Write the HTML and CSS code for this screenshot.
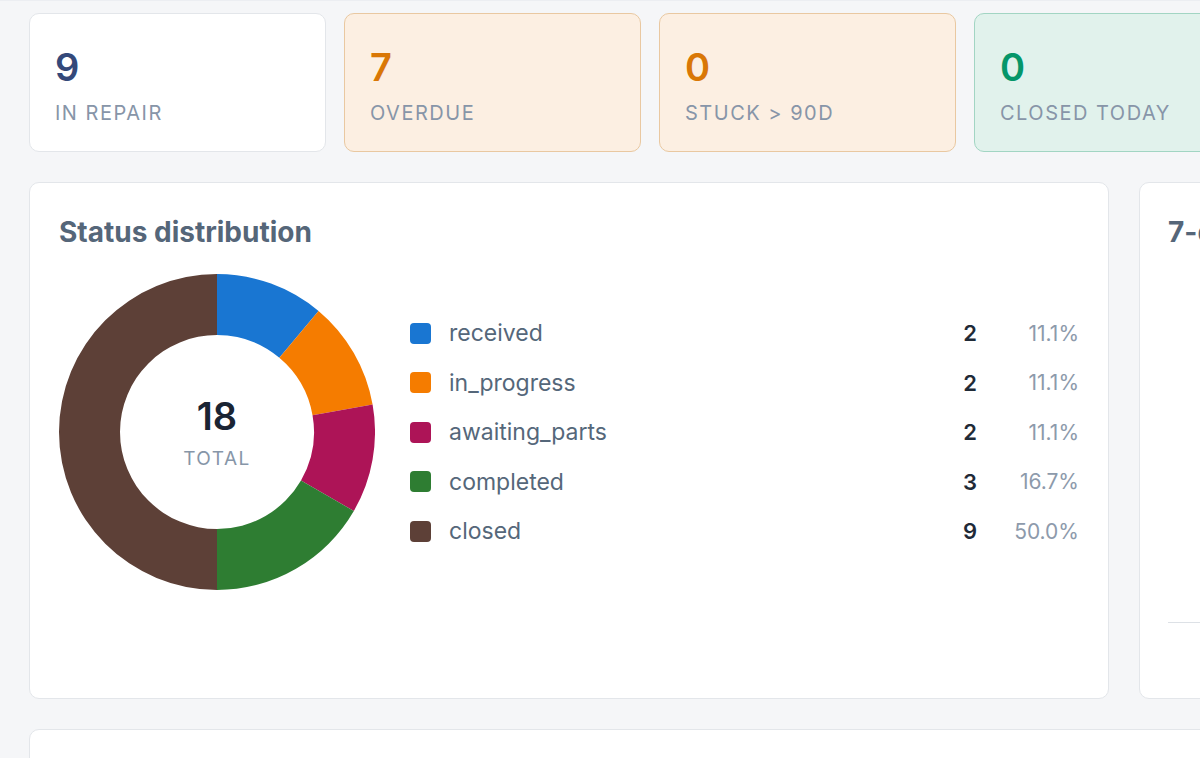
FILE: index.html
```html
<!DOCTYPE html>
<html lang="en">
<head>
<meta charset="utf-8">
<title>Repairs dashboard</title>
<link rel="stylesheet" href="styles.css">
</head>
<body>
<main class="page">
  <section class="stats">
    <div class="stat stat-neutral">
      <div class="stat-value">9</div>
      <div class="stat-label">IN REPAIR</div>
    </div>
    <div class="stat stat-warn">
      <div class="stat-value">7</div>
      <div class="stat-label">OVERDUE</div>
    </div>
    <div class="stat stat-warn">
      <div class="stat-value">0</div>
      <div class="stat-label">STUCK &gt; 90D</div>
    </div>
    <div class="stat stat-ok">
      <div class="stat-value">0</div>
      <div class="stat-label">CLOSED TODAY</div>
    </div>
  </section>

  <section class="row">
    <div class="panel panel-status">
      <h2 class="panel-title">Status distribution</h2>
      <div class="status-body">
        <div class="donut">
          <svg class="donut-svg" width="316" height="316" viewBox="0 0 316 316">
            <path fill="#1976d2" d="M158 0 A158 158 0 0 1 259.56 36.97 L220.35 83.70 A97 97 0 0 0 158 61 Z"/>
            <path fill="#f57c00" d="M259.56 36.97 A158 158 0 0 1 313.60 130.57 L253.53 141.16 A97 97 0 0 0 220.35 83.70 Z"/>
            <path fill="#ad1457" d="M313.60 130.57 A158 158 0 0 1 294.83 237 L242 206.5 A97 97 0 0 0 253.53 141.16 Z"/>
            <path fill="#2e7d32" d="M294.83 237 A158 158 0 0 1 158 316 L158 255 A97 97 0 0 0 242 206.5 Z"/>
            <path fill="#5d4037" d="M158 316 A158 158 0 0 1 158 0 L158 61 A97 97 0 0 0 158 255 Z"/>
          </svg>
          <div class="donut-center">
            <div class="donut-total">18</div>
            <div class="donut-label">TOTAL</div>
          </div>
        </div>
        <ul class="legend">
          <li class="legend-row"><span class="swatch sw-received"></span><span class="legend-name">received</span><span class="legend-count">2</span><span class="legend-pct">11.1%</span></li>
          <li class="legend-row"><span class="swatch sw-progress"></span><span class="legend-name">in_progress</span><span class="legend-count">2</span><span class="legend-pct">11.1%</span></li>
          <li class="legend-row"><span class="swatch sw-parts"></span><span class="legend-name">awaiting_parts</span><span class="legend-count">2</span><span class="legend-pct">11.1%</span></li>
          <li class="legend-row"><span class="swatch sw-completed"></span><span class="legend-name">completed</span><span class="legend-count">3</span><span class="legend-pct">16.7%</span></li>
          <li class="legend-row"><span class="swatch sw-closed"></span><span class="legend-name">closed</span><span class="legend-count">9</span><span class="legend-pct">50.0%</span></li>
        </ul>
      </div>
    </div>
    <div class="panel panel-trend">
      <h2 class="panel-title">7-day throughput</h2>
      <div class="trend-chart"></div>
    </div>
  </section>

  <section class="panel panel-bottom"></section>
</main>
</body>
</html>
```

FILE: styles.css
```css
html, body {
  margin: 0;
  padding: 0;
  overflow: hidden;
  height: 758px;
}

body {
  background: #f5f6f8;
  border-top: 1px solid #eceef2;
  font-family: Inter, "Noto Sans", "Liberation Sans", sans-serif;
  color: #1f2937;
}

.page {
  padding: 12px 0 0 29px;
  display: flex;
  flex-direction: column;
  gap: 30px;
  width: 1700px;
}

.stats {
  display: flex;
  gap: 18px;
}

.stat {
  box-sizing: border-box;
  width: 297px;
  height: 139px;
  border: 1px solid #e3e6ea;
  border-radius: 10px;
  background: #ffffff;
  padding: 4px 25px 0;
  display: flex;
  flex-direction: column;
  justify-content: center;
  gap: 11px;
}

.stat-warn {
  background: #fcefe2;
  border-color: #e9c8a1;
}

.stat-ok {
  background: #e1f2ec;
  border-color: #a2d5c3;
}

.stat-value {
  font-size: 38px;
  line-height: 46px;
  font-weight: 600;
  color: #34497a;
}

.stat-warn .stat-value { color: #d97706; }
.stat-ok .stat-value { color: #059669; }

.stat-label {
  font-size: 20px;
  line-height: 24px;
  letter-spacing: 1.5px;
  color: #8795a8;
}

.row {
  display: flex;
  gap: 30px;
}

.panel {
  box-sizing: border-box;
  background: #ffffff;
  border: 1px solid #e3e6ea;
  border-radius: 10px;
}

.panel-status {
  width: 1080px;
  height: 517px;
  padding: 31px 29px 29px;
}

.panel-trend {
  width: 520px;
  height: 517px;
  padding: 31px 28px 29px;
}

.panel-title {
  margin: 0;
  font-size: 28px;
  line-height: 36px;
  font-weight: 700;
  color: #556679;
}

.status-body {
  display: flex;
  align-items: center;
  gap: 35px;
  margin-top: 24px;
}

.donut {
  display: grid;
  width: 316px;
  height: 316px;
  flex: none;
}

.donut-svg, .donut-center {
  grid-area: 1 / 1;
}

.donut-center {
  display: flex;
  flex-direction: column;
  align-items: center;
  justify-content: center;
  gap: 10px;
}

.donut-total {
  font-size: 38px;
  line-height: 44px;
  font-weight: 600;
  color: #1a2433;
}

.donut-label {
  font-size: 19px;
  line-height: 22px;
  letter-spacing: 1.5px;
  color: #8796a8;
}

.legend {
  list-style: none;
  margin: 0;
  padding: 0;
  flex: 1;
}

.legend-row {
  display: grid;
  grid-template-columns: 21px 1fr auto 84px;
  column-gap: 18px;
  align-items: center;
  height: 49.5px;
}

.swatch {
  width: 21px;
  height: 21px;
  border-radius: 4px;
}

.sw-received { background: #1976d2; }
.sw-progress { background: #f57c00; }
.sw-parts { background: #ad1457; }
.sw-completed { background: #2e7d32; }
.sw-closed { background: #5d4037; }

.legend-name {
  font-size: 23px;
  color: #55677a;
}

.legend-count {
  font-size: 22px;
  font-weight: 600;
  color: #1f2a37;
  text-align: right;
}

.legend-pct {
  font-size: 21px;
  color: #8d9aab;
  text-align: right;
}

.trend-chart {
  margin-top: 24px;
  height: 348px;
  border-bottom: 1px solid #dde1e6;
}

.panel-bottom {
  width: 1700px;
  height: 200px;
}
```
